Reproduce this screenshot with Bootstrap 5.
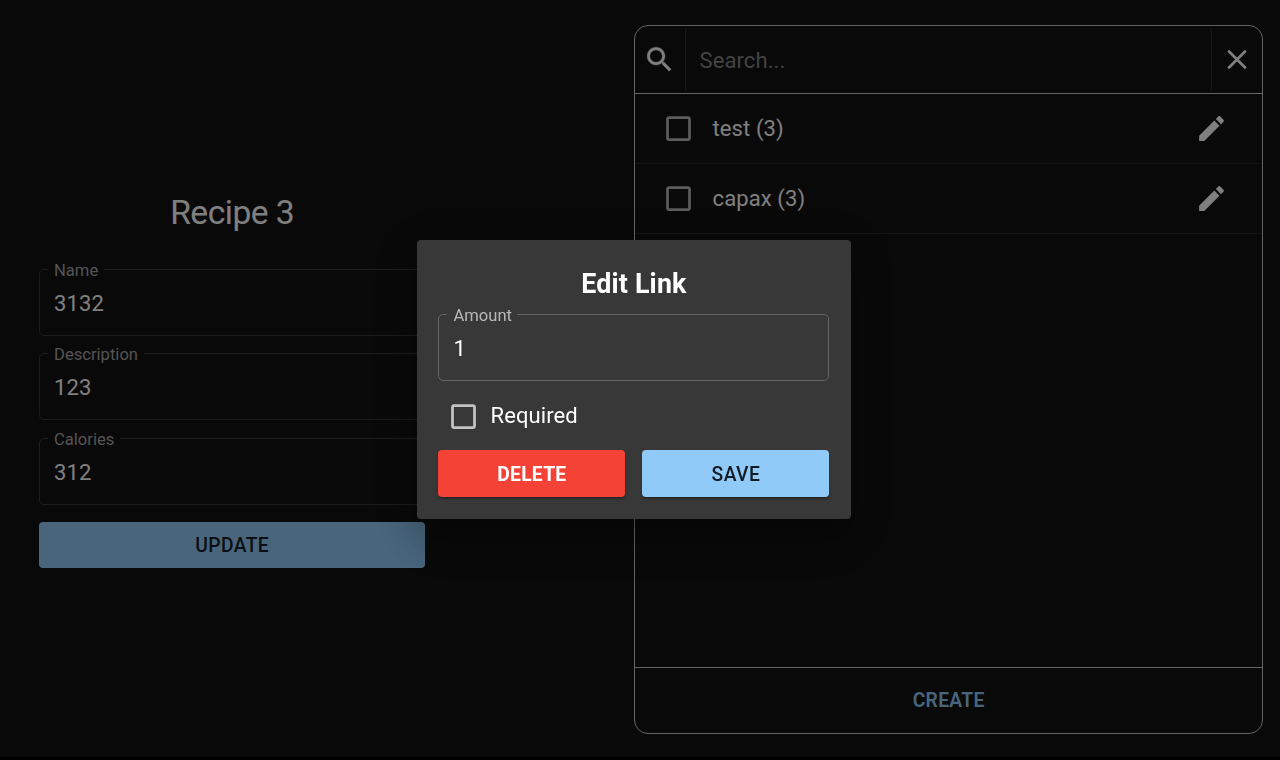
<!DOCTYPE html>
<html lang="en">
<head>
<meta charset="utf-8">
<meta name="viewport" content="width=device-width, initial-scale=1">
<title>Recipe 3</title>
<link href="https://cdn.jsdelivr.net/npm/bootstrap@5.3.0/dist/css/bootstrap.min.css" rel="stylesheet">
<style>
  body { background: #000; color: #fff; font-family: Roboto, "Liberation Sans", sans-serif; font-size: 22px; line-height: 32px; letter-spacing: .1px; }
  .app { height: 757px; background: #121212; padding: 25px 16.6px 0 39px; }
  .recipe { width: 386.4px; margin-top: 160px; }
  .recipe h1 { font-size: 33.6px; line-height: 46px; font-weight: 400; letter-spacing: -.5px; margin: 5px 0 33px; }
  .outlined { position: relative; height: 67px; border: 1px solid rgba(255,255,255,.23); border-radius: 5px; padding: 18px 14px 0; background: #121212; }
  .outlined label { position: absolute; left: 8px; top: -11px; padding: 0 5.5px 0 6px; font-size: 16.6px; line-height: 23px; letter-spacing: 0; color: #b8b8b8; background: inherit; }
  .recipe .outlined { margin-bottom: 17.3px; border-color: #3a3a3a; }
  .recipe .outlined label { color: #a8a8a8; }
  .action { border: 0; border-radius: 4px; height: 46.5px; padding: 2px 0 0; font-size: 19.3px; line-height: 44.5px; font-weight: 500; letter-spacing: .4px; box-shadow: 0 3px 1px -2px rgba(0,0,0,.2), 0 2px 3px rgba(0,0,0,.25); }
  .recipe .action { box-shadow: none; height: 46px; }
  .dialog .action { padding-top: 3px; line-height: 44px; }
  .blue, .blue:hover { background: #90caf9; color: rgba(0,0,0,.87); }
  .red, .red:hover { background: #f44336; color: #fff; font-weight: 700; letter-spacing: .25px; }
  .links { width: 629.4px; height: 709px; border: 1px solid #c8c8c8; border-radius: 14px; }
  .search { height: 68px; border-bottom: 1px solid #c8c8c8; }
  .side { width: 50px; }
  .side:first-child { padding-right: 1px; }
  .query { border: 1px solid #303030; border-top-color: transparent; border-bottom-color: transparent; border-radius: 5px; background: transparent; padding: 2px 14px 0 13.5px; color: #fff; outline: 0; min-width: 0; letter-spacing: .1px; }
  .query::placeholder { color: #868686; opacity: 1; }
  .entry { height: 70px; border-bottom: 1px solid #282828; padding: 0 34px 0 26.5px; }
  .entry span { margin-left: 18px; }
  .create { height: 66px; border: 0; border-top: 1px solid #c8c8c8; background: none; color: #90caf9; font-size: 19.3px; font-weight: 600; letter-spacing: .3px; padding-top: 2px; }
  .shade { background: rgba(0,0,0,.5); padding: 0 12px 1px 0; }
  .dialog { width: 434px; height: 279px; background: #383838; border-radius: 4px; padding: 28px 21.6px 22px 21.4px; box-shadow: 0 13px 18px -8px rgba(0,0,0,.2), 0 26px 42px 3px rgba(0,0,0,.14), 0 10px 48px 8px rgba(0,0,0,.12); }
  .dialog h2 { font-size: 26.8px; line-height: 32px; font-weight: 700; letter-spacing: .2px; margin: 0 0 14px; }
  .dialog .outlined { background: #383838; border-color: #656565; }
  .required { margin: 19px 0 18px 9.1px; height: 32px; }
  .required span { margin-left: 10px; }
  .actions { gap: 17px; }
  svg { flex: none; }
</style>
</head>
<body>
<main class="app d-flex justify-content-between">
  <section class="recipe d-flex flex-column">
    <h1 class="text-center">Recipe 3</h1>
    <div class="outlined"><label>Name</label>3132</div>
    <div class="outlined"><label>Description</label>123</div>
    <div class="outlined"><label>Calories</label>312</div>
    <button class="btn action blue">UPDATE</button>
  </section>
  <section class="links d-flex flex-column">
    <div class="search d-flex">
      <div class="side d-flex align-items-center justify-content-center">
        <svg width="33" height="33" viewBox="0 0 24 24" fill="#fff" stroke="#fff" stroke-width=".25"><path d="M15.5 14h-.79l-.28-.27C15.41 12.59 16 11.11 16 9.5 16 5.91 13.09 3 9.5 3S3 5.91 3 9.5 5.91 16 9.5 16c1.61 0 3.09-.59 4.23-1.57l.27.28v.79l5 4.99L20.49 19l-4.99-5zm-6 0C7.01 14 5 11.99 5 9.5S7.01 5 9.5 5 14 7.01 14 9.5 11.99 14 9.5 14z"/></svg>
      </div>
      <input class="query flex-grow-1" placeholder="Search...">
      <div class="side d-flex align-items-center justify-content-center pb-1">
        <svg class="mt-1" width="20" height="20" viewBox="0 0 20 20" fill="none" stroke="#fff" stroke-width="2.7" stroke-linecap="round"><path d="M2 1.500l16 16M18 1.500L2 17.500"/></svg>
      </div>
    </div>
    <div class="entry d-flex align-items-center">
      <svg width="33" height="33" viewBox="0 0 24 24" fill="#b8b8b8"><path d="M19 5v14H5V5h14m0-2H5c-1.100 0-2 .9-2 2v14c0 1.100.9 2 2 2h14c1.100 0 2-.9 2-2V5c0-1.100-.9-2-2-2z"/></svg>
      <span class="flex-grow-1">test (3)</span>
      <svg width="33" height="33" viewBox="0 0 24 24" fill="#fff"><path d="M3 17.250V21h3.750L17.810 9.940l-3.750-3.750L3 17.250zM20.710 7.040c.39-.39.39-1.020 0-1.410l-2.340-2.340c-.39-.39-1.020-.39-1.410 0l-1.830 1.830 3.750 3.750 1.830-1.830z"/></svg>
    </div>
    <div class="entry d-flex align-items-center">
      <svg width="33" height="33" viewBox="0 0 24 24" fill="#b8b8b8"><path d="M19 5v14H5V5h14m0-2H5c-1.100 0-2 .9-2 2v14c0 1.100.9 2 2 2h14c1.100 0 2-.9 2-2V5c0-1.100-.9-2-2-2z"/></svg>
      <span class="flex-grow-1">capax (3)</span>
      <svg width="33" height="33" viewBox="0 0 24 24" fill="#fff"><path d="M3 17.250V21h3.750L17.810 9.940l-3.750-3.750L3 17.250zM20.710 7.040c.39-.39.39-1.020 0-1.410l-2.340-2.340c-.39-.39-1.020-.39-1.410 0l-1.830 1.830 3.750 3.750 1.830-1.830z"/></svg>
    </div>
    <button class="create mt-auto w-100">CREATE</button>
  </section>
</main>
<div class="shade position-fixed top-0 start-0 w-100 h-100 d-flex align-items-center justify-content-center">
  <div class="dialog" role="dialog" aria-label="Edit Link">
    <h2 class="text-center">Edit Link</h2>
    <div class="outlined"><label>Amount</label>1</div>
    <div class="required d-flex align-items-center">
      <svg width="33" height="33" viewBox="0 0 24 24" fill="#c3c3c3"><path d="M19 5v14H5V5h14m0-2H5c-1.100 0-2 .9-2 2v14c0 1.100.9 2 2 2h14c1.100 0 2-.9 2-2V5c0-1.100-.9-2-2-2z"/></svg>
      <span>Required</span>
    </div>
    <div class="actions d-flex">
      <button class="btn action red flex-fill w-50">DELETE</button>
      <button class="btn action blue flex-fill w-50">SAVE</button>
    </div>
  </div>
</div>
<script src="https://cdn.jsdelivr.net/npm/bootstrap@5.3.0/dist/js/bootstrap.bundle.min.js"></script>
</body>
</html>
